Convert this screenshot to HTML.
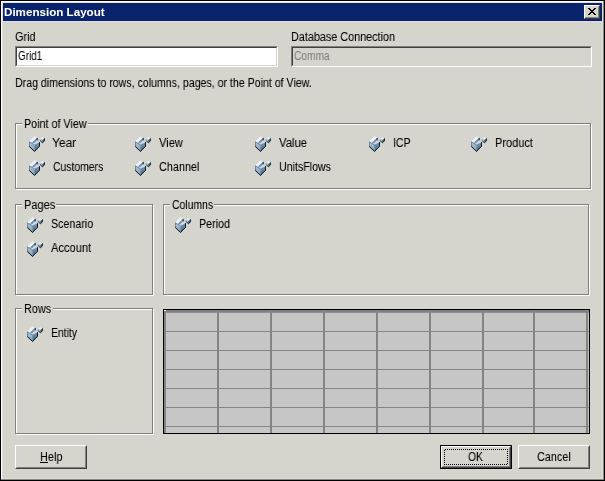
<!DOCTYPE html><html><head><meta charset="utf-8"><title>Dimension Layout</title><style>
html,body{margin:0;padding:0}
body{width:605px;height:481px;overflow:hidden;background:#000;font-family:"Liberation Sans",sans-serif}
#win{position:absolute;left:0;top:0;width:605px;height:481px;background:#000}
#face{position:absolute;left:1px;top:1px;width:603px;height:479px;background:#d6d5cd}
.hl{position:absolute;background:#fff}
#tb{position:absolute;left:3px;top:3px;width:599px;height:18px;background:#08226b}
.t{position:absolute;white-space:pre;line-height:16px;height:16px;font-size:12.5px;color:#000;transform-origin:0 0;will-change:transform;filter:url(#tx)}
.gb{position:absolute;border:1px solid #808080;box-shadow:1px 1px 0 #fff, inset 1px 1px 0 #fff;box-sizing:border-box}
.gl{position:absolute;background:#d6d5cd;height:3px}
.sunk{position:absolute;box-sizing:border-box;border:1px solid;border-color:#808080 #fff #fff #808080}
.sunk>i{position:absolute;left:0;top:0;right:0;bottom:0;border:1px solid;border-color:#404040 #d6d5cd #d6d5cd #404040}
.btn{position:absolute;box-sizing:border-box;border:1px solid;border-color:#fff #404040 #404040 #fff;background:#d6d5cd}
.btn>i{position:absolute;left:0;top:0;right:0;bottom:0;border:1px solid;border-color:#d6d5cd #808080 #808080 #d6d5cd}
.ico{position:absolute;width:16px;height:16px}
</style></head><body>
<svg width="0" height="0" style="position:absolute"><defs><filter id="tx" x="-5%" y="0" width="110%" height="100%" color-interpolation-filters="sRGB"><feComponentTransfer><feFuncA type="gamma" exponent="0.9" amplitude="1" offset="0"/></feComponentTransfer></filter></defs></svg>
<div id="win"><div id="face"></div>
<div class="hl" style="left:1px;top:1px;width:602px;height:1px"></div>
<div class="hl" style="left:1px;top:1px;width:1px;height:478px"></div>
<div style="position:absolute;left:2px;top:2px;width:600px;height:1px;background:#e6e4da"></div>
<div style="position:absolute;left:2px;top:3px;width:1px;height:475px;background:#dfded6"></div>
<div style="position:absolute;left:602px;top:2px;width:1px;height:477px;background:#dddcd4"></div>
<div style="position:absolute;left:2px;top:478px;width:601px;height:1px;background:#dddcd4"></div>
<div style="position:absolute;left:603px;top:1px;width:1px;height:479px;background:#8a8984"></div>
<div style="position:absolute;left:1px;top:479px;width:603px;height:1px;background:#8a8984"></div>
<div id="tb"></div>
<div style="position:absolute;left:3px;top:21px;width:599px;height:1px;background:#e2e0d6"></div>
<div class="btn" style="left:584px;top:5px;width:16px;height:14px"><i></i><svg width="8" height="7" viewBox="0 0 8 7" style="position:absolute;left:3px;top:2px" shape-rendering="crispEdges"><path d="M0 0h2v1h-2zM6 0h2v1h-2zM1 1h2v1h-2zM5 1h2v1h-2zM2 2h4v1h-4zM3 3h2v1h-2zM2 4h4v1h-4zM1 5h2v1h-2zM5 5h2v1h-2zM0 6h2v1h-2zM6 6h2v1h-2z" fill="#000"/></svg></div>
<div class="sunk" style="left:15px;top:46px;width:263px;height:21px;background:#fff"><i></i></div>
<div class="sunk" style="left:291px;top:46px;width:301px;height:21px;background:#d6d5cd"><i></i></div>
<div class="gb" style="left:15px;top:123px;width:576px;height:66px"></div>
<div class="gl" style="left:22px;top:122px;width:66px"></div>
<div class="gb" style="left:15px;top:204px;width:138px;height:91px"></div>
<div class="gl" style="left:22px;top:203px;width:34px"></div>
<div class="gb" style="left:163px;top:204px;width:426px;height:91px"></div>
<div class="gl" style="left:170px;top:203px;width:44px"></div>
<div class="gb" style="left:15px;top:308px;width:138px;height:126px"></div>
<div class="gl" style="left:22px;top:307px;width:31px"></div>
<svg width="0" height="0" style="position:absolute"><defs>
<linearGradient id="gl" x1="0" y1="0" x2="0" y2="1"><stop offset="0" stop-color="#b4c6d6"/><stop offset="1" stop-color="#7d99b2"/></linearGradient>
<linearGradient id="gr" x1="0" y1="0" x2="0" y2="1"><stop offset="0" stop-color="#7c97b0"/><stop offset="1" stop-color="#456582"/></linearGradient>
</defs></svg>
<svg class="ico" style="left:29px;top:136px" viewBox="0 0 16 16"><polygon points="5.5,0.1 8.1,1.8 8.1,4.0 10.7,6.1 10.7,10.3 5.6,15.7 -0.1,10.3 -0.1,5.2" fill="#9fb4c8"/><polygon points="5.5,0.1 8.1,1.8 2.8,6.9 -0.1,5.4" fill="#eef2f7"/><polygon points="8.0,1.9 8.0,4.2 5.3,7.3 3.0,6.6" fill="#7590a8"/><polygon points="8.0,4.1 10.6,6.2 5.5,9.0 3.0,6.7 5.3,7.3" fill="#cfdae5"/><polygon points="0,5.6 5.5,8.8 5.5,15.5 0,10.3" fill="url(#gl)"/><polygon points="5.5,8.8 10.6,6.3 10.6,10.3 5.5,15.5" fill="url(#gr)"/><polyline points="0.3,5.9 5.5,8.9" fill="none" stroke="#5d7994" stroke-width="0.8"/><polyline points="10.5,6.2 10.5,10.3 5.55,15.5 0.1,10.3" fill="none" stroke="#0d1722" stroke-width="1"/><polyline points="0.2,10.3 0.2,5.8" fill="none" stroke="#4d6883" stroke-width="0.9"/><polyline points="8.2,1.9 8.2,4.4" fill="none" stroke="#16222f" stroke-width="1"/><polygon points="13.0,0.5 15.9,2.3 15.9,4.7 13.4,6.9 10.8,4.4 10.8,3.0" fill="#8da6bd"/><polygon points="13.0,0.5 15.6,2.3 13.3,4.0 10.8,3.0" fill="#e6edf4"/><polygon points="10.8,3.1 13.3,4.1 13.3,6.7 10.8,4.4" fill="#a9bdce"/><polygon points="13.4,4.1 15.8,2.4 15.8,4.7 13.4,6.8" fill="#3f5d79"/><polyline points="15.6,2.4 15.6,4.7 13.4,6.7 11.2,4.7" fill="none" stroke="#0d1722" stroke-width="0.9"/></svg>
<svg class="ico" style="left:135px;top:136px" viewBox="0 0 16 16"><polygon points="5.5,0.1 8.1,1.8 8.1,4.0 10.7,6.1 10.7,10.3 5.6,15.7 -0.1,10.3 -0.1,5.2" fill="#9fb4c8"/><polygon points="5.5,0.1 8.1,1.8 2.8,6.9 -0.1,5.4" fill="#eef2f7"/><polygon points="8.0,1.9 8.0,4.2 5.3,7.3 3.0,6.6" fill="#7590a8"/><polygon points="8.0,4.1 10.6,6.2 5.5,9.0 3.0,6.7 5.3,7.3" fill="#cfdae5"/><polygon points="0,5.6 5.5,8.8 5.5,15.5 0,10.3" fill="url(#gl)"/><polygon points="5.5,8.8 10.6,6.3 10.6,10.3 5.5,15.5" fill="url(#gr)"/><polyline points="0.3,5.9 5.5,8.9" fill="none" stroke="#5d7994" stroke-width="0.8"/><polyline points="10.5,6.2 10.5,10.3 5.55,15.5 0.1,10.3" fill="none" stroke="#0d1722" stroke-width="1"/><polyline points="0.2,10.3 0.2,5.8" fill="none" stroke="#4d6883" stroke-width="0.9"/><polyline points="8.2,1.9 8.2,4.4" fill="none" stroke="#16222f" stroke-width="1"/><polygon points="13.0,0.5 15.9,2.3 15.9,4.7 13.4,6.9 10.8,4.4 10.8,3.0" fill="#8da6bd"/><polygon points="13.0,0.5 15.6,2.3 13.3,4.0 10.8,3.0" fill="#e6edf4"/><polygon points="10.8,3.1 13.3,4.1 13.3,6.7 10.8,4.4" fill="#a9bdce"/><polygon points="13.4,4.1 15.8,2.4 15.8,4.7 13.4,6.8" fill="#3f5d79"/><polyline points="15.6,2.4 15.6,4.7 13.4,6.7 11.2,4.7" fill="none" stroke="#0d1722" stroke-width="0.9"/></svg>
<svg class="ico" style="left:255px;top:136px" viewBox="0 0 16 16"><polygon points="5.5,0.1 8.1,1.8 8.1,4.0 10.7,6.1 10.7,10.3 5.6,15.7 -0.1,10.3 -0.1,5.2" fill="#9fb4c8"/><polygon points="5.5,0.1 8.1,1.8 2.8,6.9 -0.1,5.4" fill="#eef2f7"/><polygon points="8.0,1.9 8.0,4.2 5.3,7.3 3.0,6.6" fill="#7590a8"/><polygon points="8.0,4.1 10.6,6.2 5.5,9.0 3.0,6.7 5.3,7.3" fill="#cfdae5"/><polygon points="0,5.6 5.5,8.8 5.5,15.5 0,10.3" fill="url(#gl)"/><polygon points="5.5,8.8 10.6,6.3 10.6,10.3 5.5,15.5" fill="url(#gr)"/><polyline points="0.3,5.9 5.5,8.9" fill="none" stroke="#5d7994" stroke-width="0.8"/><polyline points="10.5,6.2 10.5,10.3 5.55,15.5 0.1,10.3" fill="none" stroke="#0d1722" stroke-width="1"/><polyline points="0.2,10.3 0.2,5.8" fill="none" stroke="#4d6883" stroke-width="0.9"/><polyline points="8.2,1.9 8.2,4.4" fill="none" stroke="#16222f" stroke-width="1"/><polygon points="13.0,0.5 15.9,2.3 15.9,4.7 13.4,6.9 10.8,4.4 10.8,3.0" fill="#8da6bd"/><polygon points="13.0,0.5 15.6,2.3 13.3,4.0 10.8,3.0" fill="#e6edf4"/><polygon points="10.8,3.1 13.3,4.1 13.3,6.7 10.8,4.4" fill="#a9bdce"/><polygon points="13.4,4.1 15.8,2.4 15.8,4.7 13.4,6.8" fill="#3f5d79"/><polyline points="15.6,2.4 15.6,4.7 13.4,6.7 11.2,4.7" fill="none" stroke="#0d1722" stroke-width="0.9"/></svg>
<svg class="ico" style="left:369px;top:136px" viewBox="0 0 16 16"><polygon points="5.5,0.1 8.1,1.8 8.1,4.0 10.7,6.1 10.7,10.3 5.6,15.7 -0.1,10.3 -0.1,5.2" fill="#9fb4c8"/><polygon points="5.5,0.1 8.1,1.8 2.8,6.9 -0.1,5.4" fill="#eef2f7"/><polygon points="8.0,1.9 8.0,4.2 5.3,7.3 3.0,6.6" fill="#7590a8"/><polygon points="8.0,4.1 10.6,6.2 5.5,9.0 3.0,6.7 5.3,7.3" fill="#cfdae5"/><polygon points="0,5.6 5.5,8.8 5.5,15.5 0,10.3" fill="url(#gl)"/><polygon points="5.5,8.8 10.6,6.3 10.6,10.3 5.5,15.5" fill="url(#gr)"/><polyline points="0.3,5.9 5.5,8.9" fill="none" stroke="#5d7994" stroke-width="0.8"/><polyline points="10.5,6.2 10.5,10.3 5.55,15.5 0.1,10.3" fill="none" stroke="#0d1722" stroke-width="1"/><polyline points="0.2,10.3 0.2,5.8" fill="none" stroke="#4d6883" stroke-width="0.9"/><polyline points="8.2,1.9 8.2,4.4" fill="none" stroke="#16222f" stroke-width="1"/><polygon points="13.0,0.5 15.9,2.3 15.9,4.7 13.4,6.9 10.8,4.4 10.8,3.0" fill="#8da6bd"/><polygon points="13.0,0.5 15.6,2.3 13.3,4.0 10.8,3.0" fill="#e6edf4"/><polygon points="10.8,3.1 13.3,4.1 13.3,6.7 10.8,4.4" fill="#a9bdce"/><polygon points="13.4,4.1 15.8,2.4 15.8,4.7 13.4,6.8" fill="#3f5d79"/><polyline points="15.6,2.4 15.6,4.7 13.4,6.7 11.2,4.7" fill="none" stroke="#0d1722" stroke-width="0.9"/></svg>
<svg class="ico" style="left:471px;top:136px" viewBox="0 0 16 16"><polygon points="5.5,0.1 8.1,1.8 8.1,4.0 10.7,6.1 10.7,10.3 5.6,15.7 -0.1,10.3 -0.1,5.2" fill="#9fb4c8"/><polygon points="5.5,0.1 8.1,1.8 2.8,6.9 -0.1,5.4" fill="#eef2f7"/><polygon points="8.0,1.9 8.0,4.2 5.3,7.3 3.0,6.6" fill="#7590a8"/><polygon points="8.0,4.1 10.6,6.2 5.5,9.0 3.0,6.7 5.3,7.3" fill="#cfdae5"/><polygon points="0,5.6 5.5,8.8 5.5,15.5 0,10.3" fill="url(#gl)"/><polygon points="5.5,8.8 10.6,6.3 10.6,10.3 5.5,15.5" fill="url(#gr)"/><polyline points="0.3,5.9 5.5,8.9" fill="none" stroke="#5d7994" stroke-width="0.8"/><polyline points="10.5,6.2 10.5,10.3 5.55,15.5 0.1,10.3" fill="none" stroke="#0d1722" stroke-width="1"/><polyline points="0.2,10.3 0.2,5.8" fill="none" stroke="#4d6883" stroke-width="0.9"/><polyline points="8.2,1.9 8.2,4.4" fill="none" stroke="#16222f" stroke-width="1"/><polygon points="13.0,0.5 15.9,2.3 15.9,4.7 13.4,6.9 10.8,4.4 10.8,3.0" fill="#8da6bd"/><polygon points="13.0,0.5 15.6,2.3 13.3,4.0 10.8,3.0" fill="#e6edf4"/><polygon points="10.8,3.1 13.3,4.1 13.3,6.7 10.8,4.4" fill="#a9bdce"/><polygon points="13.4,4.1 15.8,2.4 15.8,4.7 13.4,6.8" fill="#3f5d79"/><polyline points="15.6,2.4 15.6,4.7 13.4,6.7 11.2,4.7" fill="none" stroke="#0d1722" stroke-width="0.9"/></svg>
<svg class="ico" style="left:29px;top:160px" viewBox="0 0 16 16"><polygon points="5.5,0.1 8.1,1.8 8.1,4.0 10.7,6.1 10.7,10.3 5.6,15.7 -0.1,10.3 -0.1,5.2" fill="#9fb4c8"/><polygon points="5.5,0.1 8.1,1.8 2.8,6.9 -0.1,5.4" fill="#eef2f7"/><polygon points="8.0,1.9 8.0,4.2 5.3,7.3 3.0,6.6" fill="#7590a8"/><polygon points="8.0,4.1 10.6,6.2 5.5,9.0 3.0,6.7 5.3,7.3" fill="#cfdae5"/><polygon points="0,5.6 5.5,8.8 5.5,15.5 0,10.3" fill="url(#gl)"/><polygon points="5.5,8.8 10.6,6.3 10.6,10.3 5.5,15.5" fill="url(#gr)"/><polyline points="0.3,5.9 5.5,8.9" fill="none" stroke="#5d7994" stroke-width="0.8"/><polyline points="10.5,6.2 10.5,10.3 5.55,15.5 0.1,10.3" fill="none" stroke="#0d1722" stroke-width="1"/><polyline points="0.2,10.3 0.2,5.8" fill="none" stroke="#4d6883" stroke-width="0.9"/><polyline points="8.2,1.9 8.2,4.4" fill="none" stroke="#16222f" stroke-width="1"/><polygon points="13.0,0.5 15.9,2.3 15.9,4.7 13.4,6.9 10.8,4.4 10.8,3.0" fill="#8da6bd"/><polygon points="13.0,0.5 15.6,2.3 13.3,4.0 10.8,3.0" fill="#e6edf4"/><polygon points="10.8,3.1 13.3,4.1 13.3,6.7 10.8,4.4" fill="#a9bdce"/><polygon points="13.4,4.1 15.8,2.4 15.8,4.7 13.4,6.8" fill="#3f5d79"/><polyline points="15.6,2.4 15.6,4.7 13.4,6.7 11.2,4.7" fill="none" stroke="#0d1722" stroke-width="0.9"/></svg>
<svg class="ico" style="left:135px;top:160px" viewBox="0 0 16 16"><polygon points="5.5,0.1 8.1,1.8 8.1,4.0 10.7,6.1 10.7,10.3 5.6,15.7 -0.1,10.3 -0.1,5.2" fill="#9fb4c8"/><polygon points="5.5,0.1 8.1,1.8 2.8,6.9 -0.1,5.4" fill="#eef2f7"/><polygon points="8.0,1.9 8.0,4.2 5.3,7.3 3.0,6.6" fill="#7590a8"/><polygon points="8.0,4.1 10.6,6.2 5.5,9.0 3.0,6.7 5.3,7.3" fill="#cfdae5"/><polygon points="0,5.6 5.5,8.8 5.5,15.5 0,10.3" fill="url(#gl)"/><polygon points="5.5,8.8 10.6,6.3 10.6,10.3 5.5,15.5" fill="url(#gr)"/><polyline points="0.3,5.9 5.5,8.9" fill="none" stroke="#5d7994" stroke-width="0.8"/><polyline points="10.5,6.2 10.5,10.3 5.55,15.5 0.1,10.3" fill="none" stroke="#0d1722" stroke-width="1"/><polyline points="0.2,10.3 0.2,5.8" fill="none" stroke="#4d6883" stroke-width="0.9"/><polyline points="8.2,1.9 8.2,4.4" fill="none" stroke="#16222f" stroke-width="1"/><polygon points="13.0,0.5 15.9,2.3 15.9,4.7 13.4,6.9 10.8,4.4 10.8,3.0" fill="#8da6bd"/><polygon points="13.0,0.5 15.6,2.3 13.3,4.0 10.8,3.0" fill="#e6edf4"/><polygon points="10.8,3.1 13.3,4.1 13.3,6.7 10.8,4.4" fill="#a9bdce"/><polygon points="13.4,4.1 15.8,2.4 15.8,4.7 13.4,6.8" fill="#3f5d79"/><polyline points="15.6,2.4 15.6,4.7 13.4,6.7 11.2,4.7" fill="none" stroke="#0d1722" stroke-width="0.9"/></svg>
<svg class="ico" style="left:255px;top:160px" viewBox="0 0 16 16"><polygon points="5.5,0.1 8.1,1.8 8.1,4.0 10.7,6.1 10.7,10.3 5.6,15.7 -0.1,10.3 -0.1,5.2" fill="#9fb4c8"/><polygon points="5.5,0.1 8.1,1.8 2.8,6.9 -0.1,5.4" fill="#eef2f7"/><polygon points="8.0,1.9 8.0,4.2 5.3,7.3 3.0,6.6" fill="#7590a8"/><polygon points="8.0,4.1 10.6,6.2 5.5,9.0 3.0,6.7 5.3,7.3" fill="#cfdae5"/><polygon points="0,5.6 5.5,8.8 5.5,15.5 0,10.3" fill="url(#gl)"/><polygon points="5.5,8.8 10.6,6.3 10.6,10.3 5.5,15.5" fill="url(#gr)"/><polyline points="0.3,5.9 5.5,8.9" fill="none" stroke="#5d7994" stroke-width="0.8"/><polyline points="10.5,6.2 10.5,10.3 5.55,15.5 0.1,10.3" fill="none" stroke="#0d1722" stroke-width="1"/><polyline points="0.2,10.3 0.2,5.8" fill="none" stroke="#4d6883" stroke-width="0.9"/><polyline points="8.2,1.9 8.2,4.4" fill="none" stroke="#16222f" stroke-width="1"/><polygon points="13.0,0.5 15.9,2.3 15.9,4.7 13.4,6.9 10.8,4.4 10.8,3.0" fill="#8da6bd"/><polygon points="13.0,0.5 15.6,2.3 13.3,4.0 10.8,3.0" fill="#e6edf4"/><polygon points="10.8,3.1 13.3,4.1 13.3,6.7 10.8,4.4" fill="#a9bdce"/><polygon points="13.4,4.1 15.8,2.4 15.8,4.7 13.4,6.8" fill="#3f5d79"/><polyline points="15.6,2.4 15.6,4.7 13.4,6.7 11.2,4.7" fill="none" stroke="#0d1722" stroke-width="0.9"/></svg>
<svg class="ico" style="left:27px;top:217px" viewBox="0 0 16 16"><polygon points="5.5,0.1 8.1,1.8 8.1,4.0 10.7,6.1 10.7,10.3 5.6,15.7 -0.1,10.3 -0.1,5.2" fill="#9fb4c8"/><polygon points="5.5,0.1 8.1,1.8 2.8,6.9 -0.1,5.4" fill="#eef2f7"/><polygon points="8.0,1.9 8.0,4.2 5.3,7.3 3.0,6.6" fill="#7590a8"/><polygon points="8.0,4.1 10.6,6.2 5.5,9.0 3.0,6.7 5.3,7.3" fill="#cfdae5"/><polygon points="0,5.6 5.5,8.8 5.5,15.5 0,10.3" fill="url(#gl)"/><polygon points="5.5,8.8 10.6,6.3 10.6,10.3 5.5,15.5" fill="url(#gr)"/><polyline points="0.3,5.9 5.5,8.9" fill="none" stroke="#5d7994" stroke-width="0.8"/><polyline points="10.5,6.2 10.5,10.3 5.55,15.5 0.1,10.3" fill="none" stroke="#0d1722" stroke-width="1"/><polyline points="0.2,10.3 0.2,5.8" fill="none" stroke="#4d6883" stroke-width="0.9"/><polyline points="8.2,1.9 8.2,4.4" fill="none" stroke="#16222f" stroke-width="1"/><polygon points="13.0,0.5 15.9,2.3 15.9,4.7 13.4,6.9 10.8,4.4 10.8,3.0" fill="#8da6bd"/><polygon points="13.0,0.5 15.6,2.3 13.3,4.0 10.8,3.0" fill="#e6edf4"/><polygon points="10.8,3.1 13.3,4.1 13.3,6.7 10.8,4.4" fill="#a9bdce"/><polygon points="13.4,4.1 15.8,2.4 15.8,4.7 13.4,6.8" fill="#3f5d79"/><polyline points="15.6,2.4 15.6,4.7 13.4,6.7 11.2,4.7" fill="none" stroke="#0d1722" stroke-width="0.9"/></svg>
<svg class="ico" style="left:27px;top:241px" viewBox="0 0 16 16"><polygon points="5.5,0.1 8.1,1.8 8.1,4.0 10.7,6.1 10.7,10.3 5.6,15.7 -0.1,10.3 -0.1,5.2" fill="#9fb4c8"/><polygon points="5.5,0.1 8.1,1.8 2.8,6.9 -0.1,5.4" fill="#eef2f7"/><polygon points="8.0,1.9 8.0,4.2 5.3,7.3 3.0,6.6" fill="#7590a8"/><polygon points="8.0,4.1 10.6,6.2 5.5,9.0 3.0,6.7 5.3,7.3" fill="#cfdae5"/><polygon points="0,5.6 5.5,8.8 5.5,15.5 0,10.3" fill="url(#gl)"/><polygon points="5.5,8.8 10.6,6.3 10.6,10.3 5.5,15.5" fill="url(#gr)"/><polyline points="0.3,5.9 5.5,8.9" fill="none" stroke="#5d7994" stroke-width="0.8"/><polyline points="10.5,6.2 10.5,10.3 5.55,15.5 0.1,10.3" fill="none" stroke="#0d1722" stroke-width="1"/><polyline points="0.2,10.3 0.2,5.8" fill="none" stroke="#4d6883" stroke-width="0.9"/><polyline points="8.2,1.9 8.2,4.4" fill="none" stroke="#16222f" stroke-width="1"/><polygon points="13.0,0.5 15.9,2.3 15.9,4.7 13.4,6.9 10.8,4.4 10.8,3.0" fill="#8da6bd"/><polygon points="13.0,0.5 15.6,2.3 13.3,4.0 10.8,3.0" fill="#e6edf4"/><polygon points="10.8,3.1 13.3,4.1 13.3,6.7 10.8,4.4" fill="#a9bdce"/><polygon points="13.4,4.1 15.8,2.4 15.8,4.7 13.4,6.8" fill="#3f5d79"/><polyline points="15.6,2.4 15.6,4.7 13.4,6.7 11.2,4.7" fill="none" stroke="#0d1722" stroke-width="0.9"/></svg>
<svg class="ico" style="left:175px;top:217px" viewBox="0 0 16 16"><polygon points="5.5,0.1 8.1,1.8 8.1,4.0 10.7,6.1 10.7,10.3 5.6,15.7 -0.1,10.3 -0.1,5.2" fill="#9fb4c8"/><polygon points="5.5,0.1 8.1,1.8 2.8,6.9 -0.1,5.4" fill="#eef2f7"/><polygon points="8.0,1.9 8.0,4.2 5.3,7.3 3.0,6.6" fill="#7590a8"/><polygon points="8.0,4.1 10.6,6.2 5.5,9.0 3.0,6.7 5.3,7.3" fill="#cfdae5"/><polygon points="0,5.6 5.5,8.8 5.5,15.5 0,10.3" fill="url(#gl)"/><polygon points="5.5,8.8 10.6,6.3 10.6,10.3 5.5,15.5" fill="url(#gr)"/><polyline points="0.3,5.9 5.5,8.9" fill="none" stroke="#5d7994" stroke-width="0.8"/><polyline points="10.5,6.2 10.5,10.3 5.55,15.5 0.1,10.3" fill="none" stroke="#0d1722" stroke-width="1"/><polyline points="0.2,10.3 0.2,5.8" fill="none" stroke="#4d6883" stroke-width="0.9"/><polyline points="8.2,1.9 8.2,4.4" fill="none" stroke="#16222f" stroke-width="1"/><polygon points="13.0,0.5 15.9,2.3 15.9,4.7 13.4,6.9 10.8,4.4 10.8,3.0" fill="#8da6bd"/><polygon points="13.0,0.5 15.6,2.3 13.3,4.0 10.8,3.0" fill="#e6edf4"/><polygon points="10.8,3.1 13.3,4.1 13.3,6.7 10.8,4.4" fill="#a9bdce"/><polygon points="13.4,4.1 15.8,2.4 15.8,4.7 13.4,6.8" fill="#3f5d79"/><polyline points="15.6,2.4 15.6,4.7 13.4,6.7 11.2,4.7" fill="none" stroke="#0d1722" stroke-width="0.9"/></svg>
<svg class="ico" style="left:27px;top:326px" viewBox="0 0 16 16"><polygon points="5.5,0.1 8.1,1.8 8.1,4.0 10.7,6.1 10.7,10.3 5.6,15.7 -0.1,10.3 -0.1,5.2" fill="#9fb4c8"/><polygon points="5.5,0.1 8.1,1.8 2.8,6.9 -0.1,5.4" fill="#eef2f7"/><polygon points="8.0,1.9 8.0,4.2 5.3,7.3 3.0,6.6" fill="#7590a8"/><polygon points="8.0,4.1 10.6,6.2 5.5,9.0 3.0,6.7 5.3,7.3" fill="#cfdae5"/><polygon points="0,5.6 5.5,8.8 5.5,15.5 0,10.3" fill="url(#gl)"/><polygon points="5.5,8.8 10.6,6.3 10.6,10.3 5.5,15.5" fill="url(#gr)"/><polyline points="0.3,5.9 5.5,8.9" fill="none" stroke="#5d7994" stroke-width="0.8"/><polyline points="10.5,6.2 10.5,10.3 5.55,15.5 0.1,10.3" fill="none" stroke="#0d1722" stroke-width="1"/><polyline points="0.2,10.3 0.2,5.8" fill="none" stroke="#4d6883" stroke-width="0.9"/><polyline points="8.2,1.9 8.2,4.4" fill="none" stroke="#16222f" stroke-width="1"/><polygon points="13.0,0.5 15.9,2.3 15.9,4.7 13.4,6.9 10.8,4.4 10.8,3.0" fill="#8da6bd"/><polygon points="13.0,0.5 15.6,2.3 13.3,4.0 10.8,3.0" fill="#e6edf4"/><polygon points="10.8,3.1 13.3,4.1 13.3,6.7 10.8,4.4" fill="#a9bdce"/><polygon points="13.4,4.1 15.8,2.4 15.8,4.7 13.4,6.8" fill="#3f5d79"/><polyline points="15.6,2.4 15.6,4.7 13.4,6.7 11.2,4.7" fill="none" stroke="#0d1722" stroke-width="0.9"/></svg>
<div id="grid" style="position:absolute;left:163px;top:309px;width:427px;height:125px;background:#c6c6c6;box-sizing:border-box;border:1px solid #000;overflow:hidden">
<div style="position:absolute;left:0;top:0;width:425px;height:2px;background:#808080"></div>
<div style="position:absolute;left:0;top:2px;width:425px;height:1px;background:#8e8e8e"></div>
<div style="position:absolute;left:0;top:0;width:2px;height:123px;background:#848484"></div>
<div style="position:absolute;left:0;top:21px;width:425px;height:1px;background:#848484"></div>
<div style="position:absolute;left:0;top:40px;width:425px;height:1px;background:#848484"></div>
<div style="position:absolute;left:0;top:59px;width:425px;height:1px;background:#848484"></div>
<div style="position:absolute;left:0;top:78px;width:425px;height:1px;background:#848484"></div>
<div style="position:absolute;left:0;top:97px;width:425px;height:1px;background:#848484"></div>
<div style="position:absolute;left:0;top:116px;width:425px;height:1px;background:#848484"></div>
<div style="position:absolute;left:53px;top:0;width:2px;height:123px;background:#848484"></div>
<div style="position:absolute;left:106px;top:0;width:2px;height:123px;background:#848484"></div>
<div style="position:absolute;left:159px;top:0;width:2px;height:123px;background:#848484"></div>
<div style="position:absolute;left:212px;top:0;width:2px;height:123px;background:#848484"></div>
<div style="position:absolute;left:265px;top:0;width:2px;height:123px;background:#848484"></div>
<div style="position:absolute;left:318px;top:0;width:2px;height:123px;background:#848484"></div>
<div style="position:absolute;left:369px;top:0;width:2px;height:123px;background:#848484"></div>
<div style="position:absolute;left:422px;top:0;width:2px;height:123px;background:#848484"></div>
<div style="position:absolute;left:0;top:0;width:2px;height:1px;background:#fff"></div>
</div>
<div class="btn" style="left:15px;top:445px;width:72px;height:24px"><i></i></div>
<div style="position:absolute;left:440px;top:445px;width:72px;height:24px;background:#000"></div><div class="btn" style="left:441px;top:446px;width:70px;height:22px"><i></i></div>
<div style="position:absolute;left:444px;top:449px;width:64px;height:1px;background:repeating-linear-gradient(90deg,transparent 0,transparent 1px,#000 1px,#000 2px)"></div>
<div style="position:absolute;left:444px;top:464px;width:64px;height:1px;background:repeating-linear-gradient(90deg,#000 0,#000 1px,transparent 1px,transparent 2px)"></div>
<div style="position:absolute;left:444px;top:449px;width:1px;height:16px;background:repeating-linear-gradient(180deg,transparent 0,transparent 1px,#000 1px,#000 2px)"></div>
<div style="position:absolute;left:507px;top:449px;width:1px;height:16px;background:repeating-linear-gradient(180deg,#000 0,#000 1px,transparent 1px,transparent 2px)"></div>
<div class="btn" style="left:518px;top:445px;width:72px;height:24px"><i></i></div>
<div style="position:absolute;left:40px;top:462px;width:8px;height:1px;background:#000"></div>
<span class="t" style="left:3.99px;top:4px;transform:scaleX(1.0101);font-size:11.5px;font-weight:bold;color:#fff">Dimension Layout</span>
<span class="t" style="left:15.14px;top:29px;transform:scaleX(0.8636)">Grid</span>
<span class="t" style="left:291.13px;top:29px;transform:scaleX(0.8655)">Database Connection</span>
<span class="t" style="left:18.21px;top:48px;transform:scaleX(0.7931)">Grid1</span>
<span class="t" style="left:294.19px;top:48px;transform:scaleX(0.8140);color:#808080">Comma</span>
<span class="t" style="left:15.15px;top:75px;transform:scaleX(0.8477)">Drag dimensions to rows, columns, pages, or the Point of View.</span>
<span class="t" style="left:24.14px;top:116px;transform:scaleX(0.8611)">Point of View</span>
<span class="t" style="left:52.04px;top:135px;transform:scaleX(0.9583)">Year</span>
<span class="t" style="left:159.00px;top:135px;transform:scaleX(0.8889)">View</span>
<span class="t" style="left:279.00px;top:135px;transform:scaleX(0.9032)">Value</span>
<span class="t" style="left:393.16px;top:135px;transform:scaleX(0.8421)">ICP</span>
<span class="t" style="left:495.12px;top:135px;transform:scaleX(0.8810)">Product</span>
<span class="t" style="left:53.17px;top:159px;transform:scaleX(0.8305)">Customers</span>
<span class="t" style="left:159.13px;top:159px;transform:scaleX(0.8667)">Channel</span>
<span class="t" style="left:279.15px;top:159px;transform:scaleX(0.8500)">UnitsFlows</span>
<span class="t" style="left:24.12px;top:197px;transform:scaleX(0.8824)">Pages</span>
<span class="t" style="left:172.17px;top:197px;transform:scaleX(0.8333)">Columns</span>
<span class="t" style="left:51.15px;top:216px;transform:scaleX(0.8542)">Scenario</span>
<span class="t" style="left:51.00px;top:240px;transform:scaleX(0.8889)">Account</span>
<span class="t" style="left:199.14px;top:216px;transform:scaleX(0.8571)">Period</span>
<span class="t" style="left:24.13px;top:301px;transform:scaleX(0.8667)">Rows</span>
<span class="t" style="left:51.17px;top:325px;transform:scaleX(0.8333)">Entity</span>
<span class="t" style="left:40.12px;top:449px;transform:scaleX(0.8750)">Help</span>
<span class="t" style="left:468.18px;top:449px;transform:scaleX(0.8235)">OK</span>
<span class="t" style="left:537.14px;top:449px;transform:scaleX(0.8649)">Cancel</span>
</div></body></html>
